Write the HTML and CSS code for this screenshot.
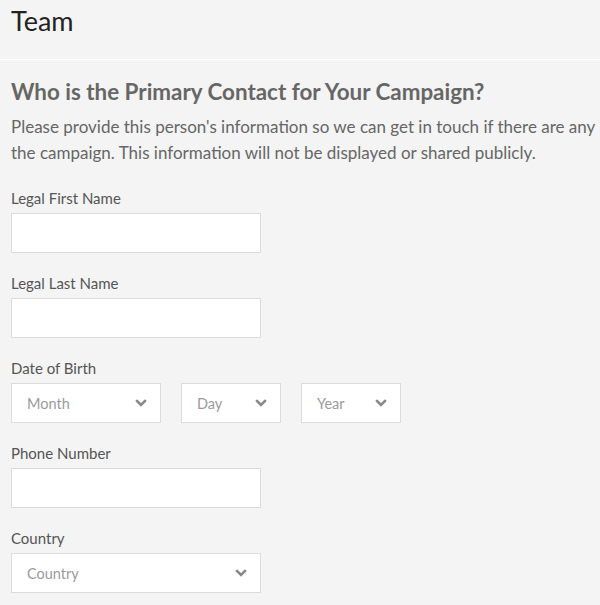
FILE: index.html
```html
<!DOCTYPE html>
<html>
<head>
<meta charset="utf-8">
<link rel="stylesheet" href="styles.css">
</head>
<body>
<header class="top">
  <h1 class="title">Team</h1>
</header>
<main class="content">
  <h2 class="heading">Who is the Primary Contact for Your Campaign?</h2>
  <p class="intro">Please provide this person's information so we can get in touch if there are any issues with the campaign. This information will not be displayed or shared publicly.</p>

  <div class="field">
    <label class="label">Legal First Name</label>
    <div class="input"></div>
  </div>
  <div class="field">
    <label class="label">Legal Last Name</label>
    <div class="input"></div>
  </div>
  <div class="field">
    <label class="label">Date of Birth</label>
    <div class="row">
      <div class="select w150"><span class="ph">Month</span><svg class="chev" viewBox="0 0 12 8"><polyline points="1.2,1.2 6,6 10.8,1.2"/></svg></div>
      <div class="select w100"><span class="ph">Day</span><svg class="chev" viewBox="0 0 12 8"><polyline points="1.2,1.2 6,6 10.8,1.2"/></svg></div>
      <div class="select w100"><span class="ph">Year</span><svg class="chev" viewBox="0 0 12 8"><polyline points="1.2,1.2 6,6 10.8,1.2"/></svg></div>
    </div>
  </div>
  <div class="field">
    <label class="label">Phone Number</label>
    <div class="input"></div>
  </div>
  <div class="field">
    <label class="label">Country</label>
    <div class="select w250"><span class="ph">Country</span><svg class="chev" viewBox="0 0 12 8"><polyline points="1.2,1.2 6,6 10.8,1.2"/></svg></div>
  </div>
</main>
</body>
</html>
```
FILE: styles.css
```css
html, body {
  margin: 0;
  padding: 0;
  background: #f4f4f4;
  font-family: Lato, "Liberation Sans", sans-serif;
  overflow: hidden;
}
.top {
  height: 60px;
  border-bottom: 1px solid #ffffff;
  padding-left: 11px;
  box-sizing: border-box;
}
.title {
  margin: 0;
  padding-top: 5px;
  font-size: 27px;
  font-weight: 400;
  color: #222;
  line-height: 32px;
}
.content {
  padding: 0 0 0 11px;
}
.heading {
  margin: 18px 0 0;
  font-size: 22.4px;
  font-weight: 700;
  color: #666;
  line-height: 28px;
}
.intro {
  margin: 8px 0 0;
  font-size: 17px;
  line-height: 26px;
  color: #666;
  width: 688px;
}
.field {
  margin-top: 20px;
}
.field:first-of-type {
  margin-top: 22px;
}
.label {
  display: block;
  font-size: 15px;
  color: #555;
  line-height: 20px;
  margin-bottom: 5px;
}
.input {
  width: 250px;
  height: 40px;
  background: #fff;
  border: 1px solid #dcdcdc;
  box-sizing: border-box;
}
.row {
  display: flex;
  gap: 20px;
}
.select {
  height: 40px;
  background: #fff;
  border: 1px solid #dcdcdc;
  box-sizing: border-box;
  display: flex;
  align-items: center;
  justify-content: space-between;
  padding: 0 13px 0 15px;
}
.w150 { width: 150px; }
.w100 { width: 100px; }
.w250 { width: 250px; }
.ph {
  font-size: 14.5px;
  color: #9a9a9a;
}
.chev {
  width: 12px;
  height: 8px;
  fill: none;
  stroke: #888;
  stroke-width: 2.6;
}
```
